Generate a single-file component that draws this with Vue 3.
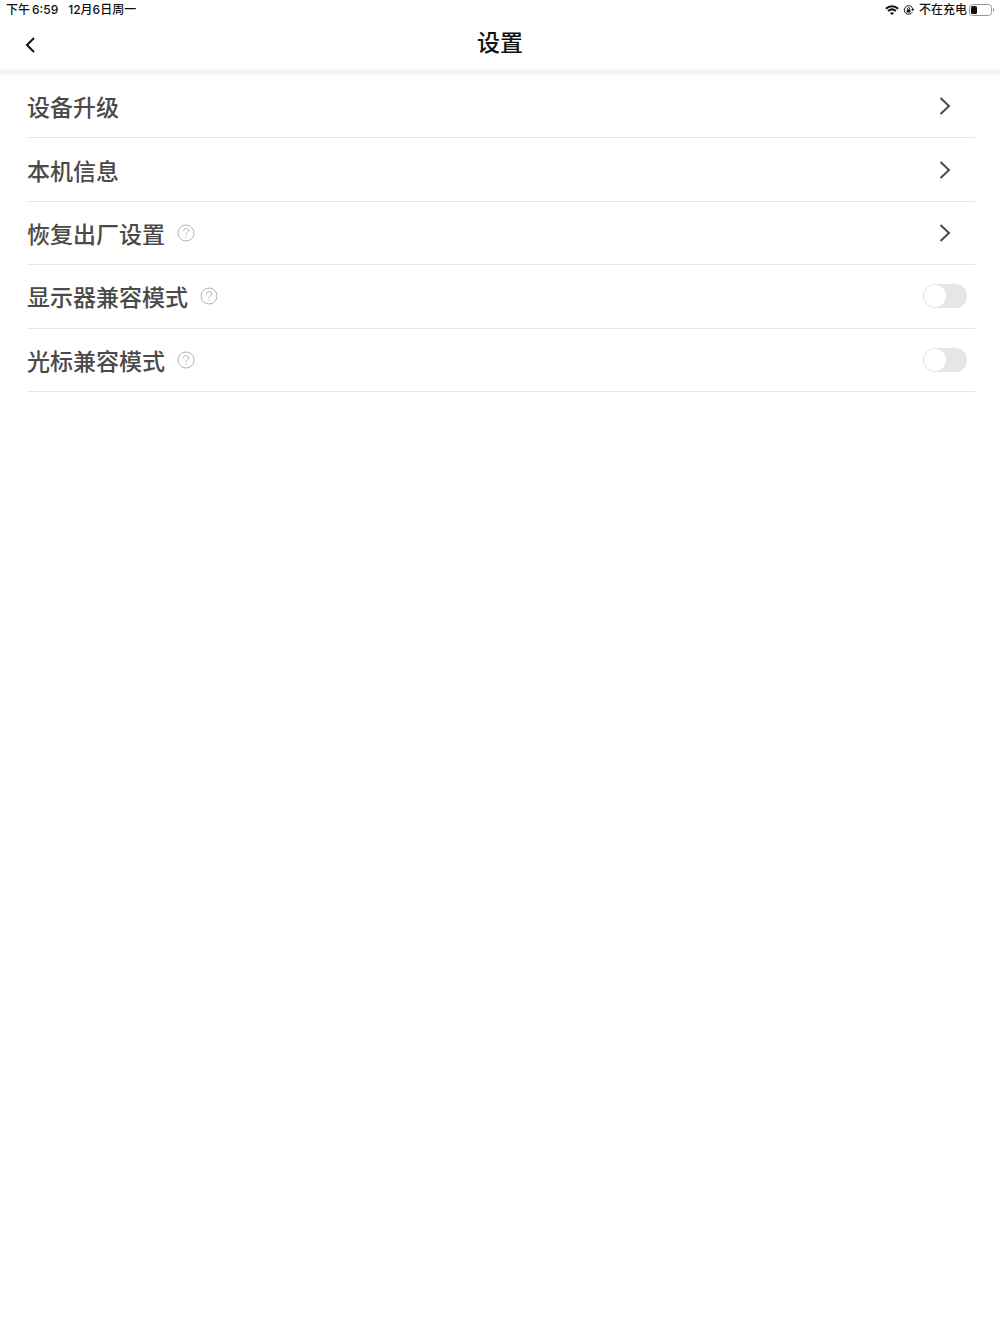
<template>
  <div class="page">
    <div class="status-bar">
      <div class="status-left">
        <span class="time"><span>下午</span><span>6:59</span></span>
        <span>12月6日周一</span>
      </div>
      <div class="status-right">
        <svg class="wifi" viewBox="0 0 14 10" aria-hidden="true">
          <path d="M0.9 3.8C4.4 0.5 9.6 0.5 13.1 3.8" />
          <path d="M3.1 6.1C5.4 4.1 8.6 4.1 10.9 6.1" />
          <path class="solid" d="M4.9 7.9C6.1 6.9 7.9 6.9 9.1 7.9L7 10Z" />
        </svg>
        <svg class="lock" viewBox="0 0 12 12" aria-hidden="true">
          <path d="M9.3 8.2A4.3 4.3 0 1 1 9.8 5" />
          <path class="solid" d="M8.2 5H11.4L9.8 7.2Z" />
          <rect class="solid" x="3.7" y="5.4" width="3.8" height="3" rx="0.4" />
          <path d="M4.5 5.6V4.7A1.1 1.1 0 0 1 6.7 4.7V5.6" />
        </svg>
        <span>不在充电</span>
        <svg class="battery" viewBox="0 0 26 12" aria-hidden="true">
          <rect class="shell" x="0.5" y="0.5" width="22" height="11" rx="3" />
          <rect class="solid" x="2" y="2" width="6" height="8" rx="1.5" />
          <path class="tip" d="M24 4C25.8 4.6 25.8 7.4 24 8Z" />
        </svg>
      </div>
    </div>

    <header class="nav-bar">
      <button class="back" type="button" aria-label="返回">
        <svg viewBox="0 0 12 18" aria-hidden="true">
          <path d="M10 2L3 9L10 16" />
        </svg>
      </button>
      <h1>设置</h1>
    </header>

    <ul class="list">
      <li v-for="item in items" :key="item.id" class="row">
        <button v-if="item.type === 'link'" :id="item.id" class="label" type="button">
          {{ item.label }}
        </button>
        <label v-else class="label" :for="item.id">{{ item.label }}</label>
        <button v-if="item.help" class="help" type="button" :aria-label="item.label + '说明'">
          <svg viewBox="0 0 18 18" aria-hidden="true">
            <circle cx="9" cy="9" r="8" />
            <path d="M6.4 7.2C6.4 3.6 11.7 3.7 11.7 7C11.7 8.9 9 8.9 9 11" />
            <path d="M9 12.3V13.7" />
          </svg>
        </button>
        <svg v-if="item.type === 'link'" class="arrow" viewBox="0 0 12 20" aria-hidden="true">
          <path d="M1.5 2L10 10L1.5 18" />
        </svg>
        <input v-else :id="item.id" v-model="item.on" class="switch" type="checkbox" role="switch" />
      </li>
    </ul>
  </div>
</template>

<script setup>
import { reactive } from 'vue';

const items = reactive([
  { id: 'upgrade', label: '设备升级', type: 'link' },
  { id: 'info', label: '本机信息', type: 'link' },
  { id: 'reset', label: '恢复出厂设置', type: 'link', help: true },
  { id: 'display', label: '显示器兼容模式', type: 'switch', help: true, on: false },
  { id: 'cursor', label: '光标兼容模式', type: 'switch', help: true, on: false },
]);
</script>

<style>
body {
  margin: 0;
  background-color: #fff;
}
</style>

<style scoped>
.page {
  font-family: Inter, "Noto Sans CJK SC", sans-serif;
  color: #111;
}
svg {
  display: block;
  flex: none;
  fill: none;
  stroke: currentColor;
}
.solid {
  fill: currentColor;
  stroke: none;
}
button {
  padding: 0;
  border: 0;
  background: none;
  font: inherit;
  color: inherit;
  cursor: pointer;
}

/* Barra de estado */
.status-bar {
  display: flex;
  justify-content: space-between;
  height: 20px;
  padding: 0 5px 0 6px;
  font-size: 12px;
  font-weight: 500;
  line-height: 20px;
}
.status-left {
  display: flex;
  gap: 10px;
}
.time {
  display: flex;
  gap: 2px;
}
.status-right {
  display: flex;
  align-items: center;
}
.wifi {
  width: 14px;
  height: 10px;
  margin-right: 4px;
  stroke-width: 2;
}
.lock {
  width: 12px;
  height: 12px;
  margin-right: 4px;
}
.battery {
  width: 26px;
  height: 12px;
  margin-left: 2px;
}
.shell {
  stroke: #999;
}
.tip {
  fill: #999;
  stroke: none;
}

/* Cabecera */
.nav-bar {
  display: grid;
  grid-template-columns: 60px 1fr 60px;
  align-items: center;
  height: 49px;
  border-bottom: 6px solid #f5f5f5;
}
.nav-bar h1 {
  margin: 0 0 4px;
  font-size: 23px;
  font-weight: 500;
  line-height: 34px;
  text-align: center;
}
.back {
  display: flex;
  align-items: center;
  justify-content: center;
  height: 48px;
}
.back svg {
  width: 12px;
  height: 18px;
  stroke-width: 2;
}

/* Lista de opciones */
.list {
  display: grid;
  grid-auto-rows: 1fr;
  min-height: 317px;
  margin: 0 25px 0 27px;
  padding: 0;
  list-style: none;
}
.row {
  display: flex;
  align-items: center;
  border-bottom: 1px solid #e6e6e6;
  color: #4a4a4a;
}
.label {
  padding-top: 4px;
  font-size: 23px;
  font-weight: 500;
  line-height: 34px;
}
.help {
  margin-left: 12px;
  color: #b4b4b4;
}
.help svg {
  width: 18px;
  height: 18px;
}
.arrow {
  width: 12px;
  height: 20px;
  margin-left: auto;
  margin-right: 24px;
  stroke-width: 2;
}
.switch {
  appearance: none;
  display: flex;
  box-sizing: border-box;
  width: 44px;
  height: 24px;
  margin: 0 8px 0 auto;
  padding: 1px;
  border-radius: 12px;
  background-color: #e6e6e6;
  cursor: pointer;
}
.switch::before {
  content: "";
  width: 22px;
  height: 22px;
  border-radius: 50%;
  background-color: #fff;
}
.switch:checked {
  justify-content: flex-end;
  background-color: #4cd964;
}
</style>
